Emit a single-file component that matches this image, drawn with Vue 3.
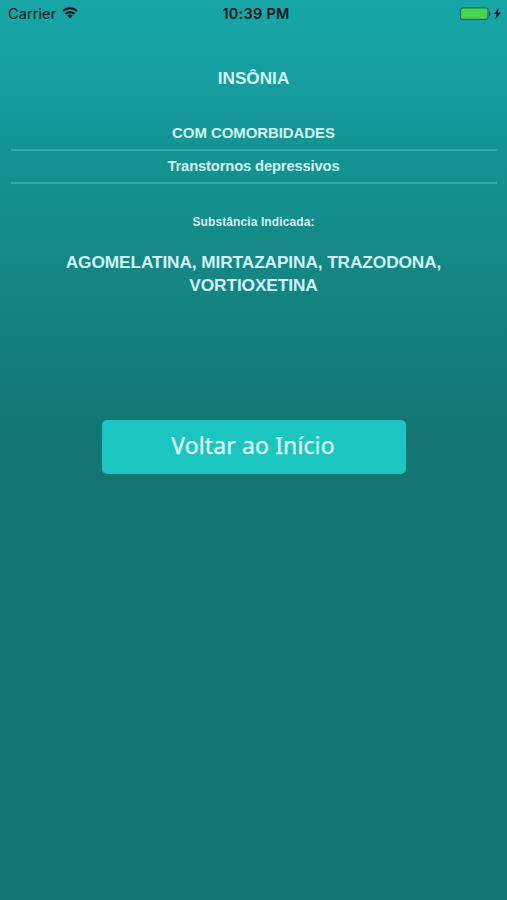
<script setup>
const substances = ['AGOMELATINA, MIRTAZAPINA, TRAZODONA,', 'VORTIOXETINA']
</script>

<template>
  <div class="screen">
    <header class="status">
      <div class="carrier">
        <span>Carrier</span>
        <svg class="wifi" width="16" height="12" viewBox="0 0 16 12">
          <g fill="none" stroke="#04191e" stroke-width="2.1">
            <path d="M1 4.1C4.9.2 11.1.2 15 4.1" />
            <path d="M3.5 6.9C6 4.5 10 4.5 12.5 6.9" />
          </g>
          <path d="M5.2 8.6C6.8 7.2 9.2 7.2 10.8 8.6L8 11.6z" fill="#04191e" />
        </svg>
      </div>
      <time class="clock">10:39 PM</time>
      <div class="power">
        <svg width="42" height="14" viewBox="0 0 42 14">
          <rect x="0.6" y="1" width="27.4" height="11.4" rx="2.2" fill="#49d552" stroke="#12666a" stroke-width="1.1" />
          <path d="M29 4.6h.5c1.2 0 1.2 4.4 0 4.4H29z" fill="#07444a" />
          <path d="M38.8 .8L33.8 7.1H36.8L35.2 12.2L41.2 5.6H38z" fill="#04191e" />
        </svg>
      </div>
    </header>
    <main class="content">
      <h1 class="title">INSÔNIA</h1>
      <section class="rows">
        <div class="row">COM COMORBIDADES</div>
        <div class="row second">Transtornos depressivos</div>
      </section>
      <h2 class="label">Substância Indicada:</h2>
      <div class="substances">
        <div v-for="(line, i) in substances" :key="i">{{ line }}</div>
      </div>
      <button class="back" type="button">Voltar ao Início</button>
    </main>
  </div>
</template>

<style>
body {
  background: #137473;
}
</style>

<style scoped>
.screen {
  height: 900px;
  overflow: hidden;
  background: linear-gradient(#17a5a6 0, #17a3a3 40px, #139493 150px, #148785 270px, #137473 445px, #137473 100%);
  font-family: "Liberation Sans", Arial, sans-serif;
  color: #d0f3f3;
}
.status {
  height: 27px;
  display: grid;
  grid-template-columns: 1fr auto 1fr;
  align-items: center;
  padding: 0 5px 0 8px;
  box-sizing: border-box;
  color: #04191e;
  font-family: Inter, sans-serif;
}
.carrier {
  display: flex;
  align-items: center;
  gap: 6px;
  font-size: 14.5px;
  letter-spacing: 0.1px;
}
.wifi {
  display: block;
  margin-top: -2px;
}
.clock {
  font-size: 14.4px;
  font-weight: 600;
  letter-spacing: 0.3px;
  margin-left: 2px;
}
.power {
  display: flex;
  justify-content: flex-end;
}
.content {
  display: flex;
  flex-direction: column;
  align-items: center;
}
.title {
  margin: 40px 0 0;
  font-size: 17.2px;
  line-height: 22px;
  font-weight: 700;
}
.rows {
  width: 486px;
  margin-top: 28px;
}
.row {
  height: 32px;
  line-height: 32px;
  border-bottom: 2px solid #28abab;
  text-align: center;
  font-size: 15px;
  letter-spacing: -0.08px;
  font-weight: 700;
}
.second {
  height: 31px;
  line-height: 31px;
  font-size: 14.8px;
  letter-spacing: -0.17px;
}
.label {
  margin: 30px 0 0;
  font-size: 12px;
  letter-spacing: 0.1px;
  line-height: 16px;
  font-weight: 700;
}
.substances {
  margin-top: 21px;
  text-align: center;
  font-size: 17.3px;
  letter-spacing: -0.11px;
  line-height: 23px;
  font-weight: 700;
}
.back {
  width: 304px;
  height: 54px;
  margin-top: 123px;
  padding: 0 1px 4px 0;
  border: 0;
  border-radius: 5px;
  background: #1bc5c0;
  color: #e2ffff;
  font-family: "Noto Sans", sans-serif;
  font-size: 23px;
  letter-spacing: 0.12px;
  -webkit-text-stroke: 0.25px #e2ffff;
}
</style>
